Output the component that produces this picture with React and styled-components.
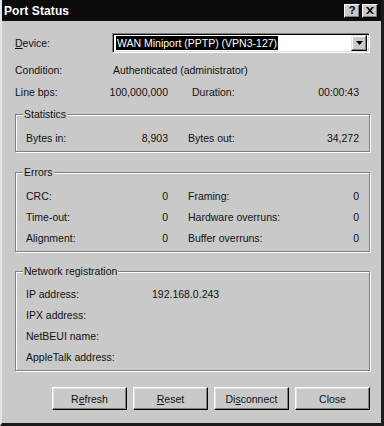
import styled, { createGlobalStyle } from "styled-components";

const GlobalStyle = createGlobalStyle`
  html, body {
    margin: 0;
    padding: 0;
    background: #c9c9c9;
  }
  body {
    font-family: "Liberation Sans", Arial, sans-serif;
  }
`;

const Window = styled.div`
  width: 384px;
  height: 426px;
  box-sizing: border-box;
  background: #c9c9c9;
  border-left: 2px solid #e4e4e4;
  border-right: 3px solid #1c1c1c;
  border-bottom: 3px solid #1c1c1c;
  display: flex;
  flex-direction: column;
  color: #111;
  font-size: 10.5px;
`;

const TitleBar = styled.div`
  height: 21px;
  flex: none;
  background: #0c0c0c;
  display: flex;
  align-items: center;
  gap: 2px;
  padding: 0 3px 0 2px;
`;

const Caption = styled.div`
  flex: 1;
  color: #fff;
  font-weight: bold;
  font-size: 12px;
  letter-spacing: 0.1px;
`;

const CapButton = styled.div`
  width: 16px;
  height: 14px;
  box-sizing: border-box;
  background: #c9c9c9;
  border-top: 1px solid #fff;
  border-left: 1px solid #fff;
  border-right: 1px solid #000;
  border-bottom: 1px solid #000;
  box-shadow: inset -1px -1px 0 #808080;
  display: flex;
  align-items: center;
  justify-content: center;
  font-weight: bold;
  font-size: 11px;
  line-height: 1;
  color: #000;
`;

const Body = styled.div`
  flex: 1;
  display: flex;
  flex-direction: column;
  padding: 12px 11px 0 13px;
`;

const DeviceRow = styled.div`
  display: grid;
  grid-template-columns: 97px 1fr;
  align-items: center;
  height: 20px;
`;

const Combo = styled.div`
  height: 20px;
  box-sizing: border-box;
  background: #fff;
  border-top: 1px solid #808080;
  border-left: 1px solid #808080;
  border-right: 1px solid #fff;
  border-bottom: 1px solid #fff;
  box-shadow: inset 1px 1px 0 #000, inset -1px -1px 0 #dcdcdc;
  display: flex;
  align-items: center;
  padding: 2px 2px 2px 3px;
`;

const Selected = styled.span`
  background: #000;
  color: #fff;
  padding: 0 1px;
  line-height: 14px;
`;

const DropButton = styled.div`
  margin-left: auto;
  width: 16px;
  height: 16px;
  box-sizing: border-box;
  background: #c9c9c9;
  border-top: 1px solid #e6e6e6;
  border-left: 1px solid #e6e6e6;
  border-right: 1px solid #000;
  border-bottom: 1px solid #000;
  box-shadow: inset -1px -1px 0 #808080, inset 1px 1px 0 #fff;
  display: flex;
  align-items: center;
  justify-content: center;
`;

const InfoRow = styled.div`
  display: grid;
  grid-template-columns: ${(p) => p.$cols};
  column-gap: ${(p) => p.$gap || 0}px;
  align-items: center;
  height: ${(p) => p.$h}px;
  margin-right: ${(p) => p.$right || 0}px;
  margin-top: ${(p) => p.$top || 0}px;
`;

const Pair = styled.div`
  display: flex;
  justify-content: space-between;
  align-items: center;
`;

const Group = styled.fieldset`
  margin: ${(p) => p.$top}px 0 0 0;
  padding: ${(p) => p.$pad || 7}px 10px 3px 10px;
  border: 1px solid #808080;
  box-shadow: inset 1px 1px 0 #fff, 1px 1px 0 #fff;
  min-width: 0;
`;

const Legend = styled.legend`
  padding: 0 1px;
  margin-left: -3px;
  line-height: 12px;
  background: #c9c9c9;
`;

const ButtonRow = styled.div`
  display: flex;
  justify-content: flex-end;
  gap: 6px;
  margin-top: 16px;
`;

const Button = styled.button`
  width: 75px;
  height: 23px;
  box-sizing: border-box;
  padding: 0;
  background: #c9c9c9;
  color: #111;
  font-family: "Liberation Sans", Arial, sans-serif;
  font-size: 10.5px;
  border-top: 1px solid #fff;
  border-left: 1px solid #fff;
  border-right: 1px solid #000;
  border-bottom: 1px solid #000;
  border-radius: 0;
  box-shadow: inset -1px -1px 0 #808080, inset 1px 1px 0 #e2e2e2;
  u {
    text-underline-offset: 1px;
  }
`;

export default function App() {
  return (
    <>
      <GlobalStyle />
      <Window>
        <TitleBar>
          <Caption>Port Status</Caption>
          <CapButton>?</CapButton>
          <CapButton>
            <svg width="8" height="7" viewBox="0 0 8 7">
              <path d="M0 0h2l2 2.2L6 0h2L5 3.5 8 7H6L4 4.8 2 7H0l3-3.5z" fill="#000" />
            </svg>
          </CapButton>
        </TitleBar>
        <Body>
          <DeviceRow>
            <span>
              <u>D</u>evice:
            </span>
            <Combo>
              <Selected>WAN Miniport (PPTP) (VPN3-127)</Selected>
              <DropButton>
                <svg width="7" height="4" viewBox="0 0 7 4">
                  <path d="M0 0h7L3.5 4z" fill="#000" />
                </svg>
              </DropButton>
            </Combo>
          </DeviceRow>
          <InfoRow $cols="98px 1fr" $h={22} $top={6}>
            <span>Condition:</span>
            <span>Authenticated (administrator)</span>
          </InfoRow>
          <InfoRow $cols="153px 167px" $gap={24} $h={22} $right={11}>
            <Pair>
              <span>Line bps:</span>
              <span>100,000,000</span>
            </Pair>
            <Pair>
              <span>Duration:</span>
              <span>00:00:43</span>
            </Pair>
          </InfoRow>

          <Group $top={5}>
            <Legend>Statistics</Legend>
            <InfoRow $cols="142px 171px" $gap={20} $h={21}>
              <Pair>
                <span>Bytes in:</span>
                <span>8,903</span>
              </Pair>
              <Pair>
                <span>Bytes out:</span>
                <span>34,272</span>
              </Pair>
            </InfoRow>
          </Group>

          <Group $top={14}>
            <Legend>Errors</Legend>
            {[
              ["CRC:", "0", "Framing:", "0"],
              ["Time-out:", "0", "Hardware overruns:", "0"],
              ["Alignment:", "0", "Buffer overruns:", "0"],
            ].map(([a, b, c, d]) => (
              <InfoRow key={a} $cols="142px 171px" $gap={20} $h={21}>
                <Pair>
                  <span>{a}</span>
                  <span>{b}</span>
                </Pair>
                <Pair>
                  <span>{c}</span>
                  <span>{d}</span>
                </Pair>
              </InfoRow>
            ))}
          </Group>

          <Group $top={13} $pad={6}>
            <Legend>Network registration</Legend>
            {[
              ["IP address:", "192.168.0.243"],
              ["IPX address:", ""],
              ["NetBEUI name:", ""],
              ["AppleTalk address:", ""],
            ].map(([label, value]) => (
              <InfoRow key={label} $cols="126px 1fr" $h={21}>
                <span>{label}</span>
                <span>{value}</span>
              </InfoRow>
            ))}
          </Group>

          <ButtonRow>
            <Button>
              R<u>e</u>fresh
            </Button>
            <Button>
              <u>R</u>eset
            </Button>
            <Button>
              Di<u>s</u>connect
            </Button>
            <Button>Close</Button>
          </ButtonRow>
        </Body>
      </Window>
    </>
  );
}
